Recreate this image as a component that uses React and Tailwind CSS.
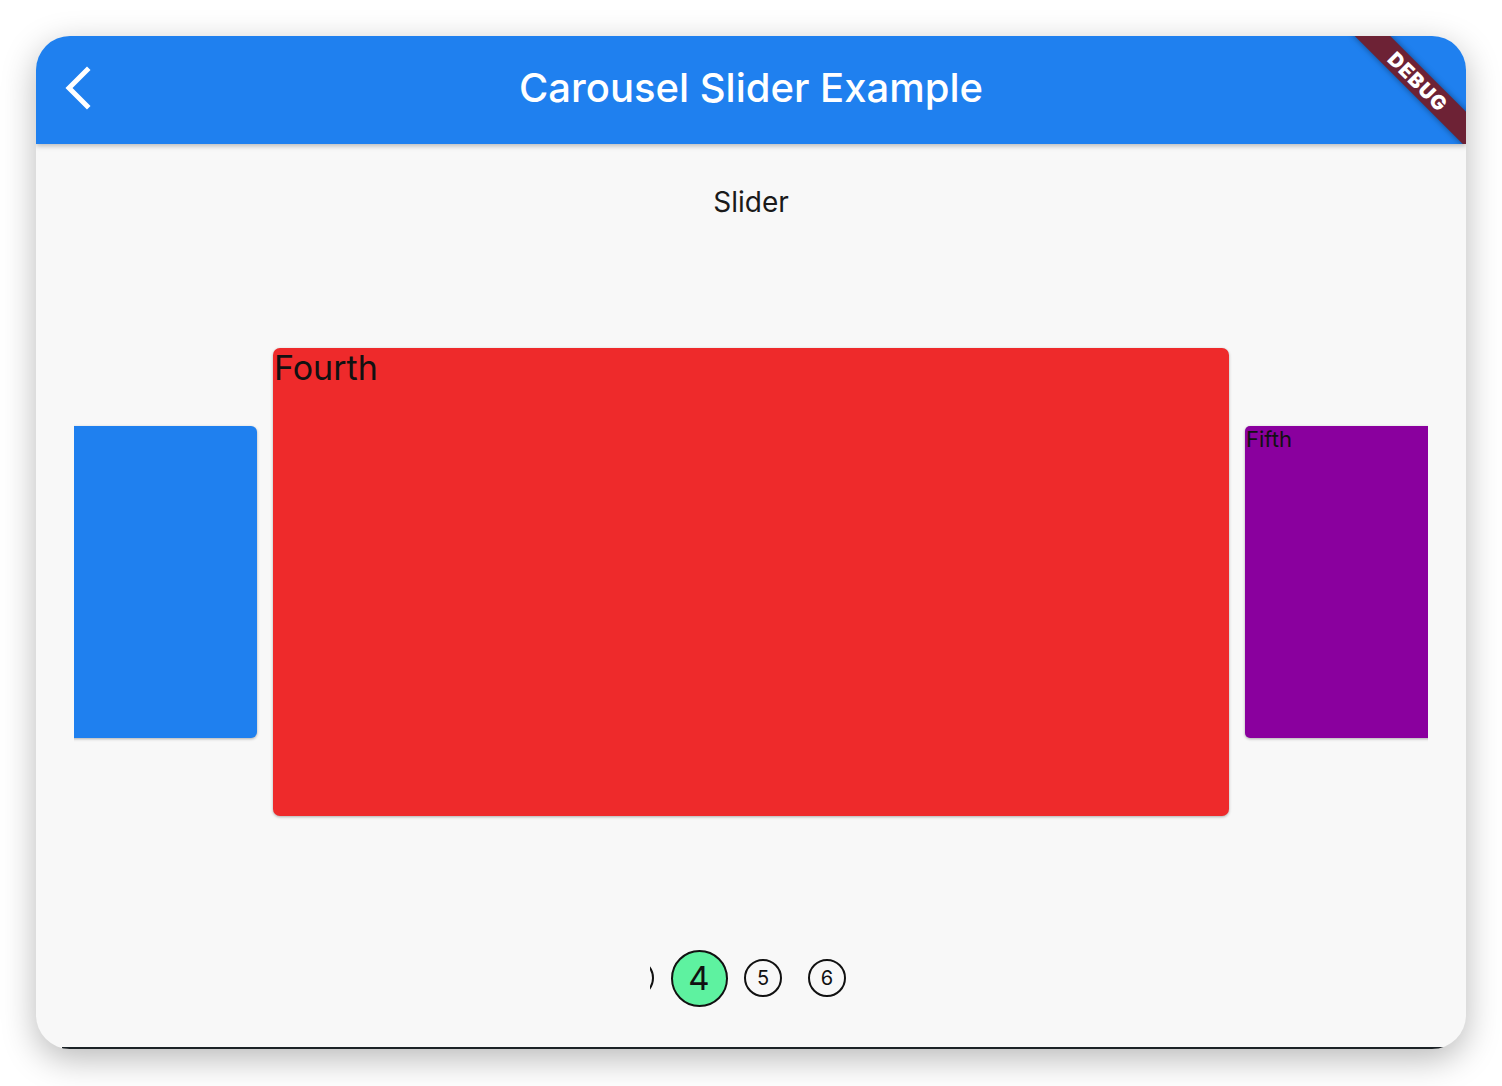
import React from 'react';

const font = { fontFamily: 'Inter, "Noto Sans", sans-serif' };

const Dot = ({ n, active }) => (
  <div className="w-[64px] h-[58px] shrink-0 flex items-center justify-center">
    {active ? (
      <div className="w-[57px] h-[57px] rounded-full border-[2.5px] border-[#111] bg-[#5ef2a0] flex items-center justify-center text-[33px] leading-none text-[#111]">
        {n}
      </div>
    ) : (
      <div className="w-[38px] h-[38px] rounded-full border-2 border-[#111] flex items-center justify-center text-[20px] leading-none text-[#111]">
        {n}
      </div>
    )}
  </div>
);

export default function App() {
  return (
    <div className="w-[1502px] h-[1086px] bg-white pt-[36px] pl-[36px]" style={font}>
      {/* Window */}
      <div className="relative w-[1430px] h-[1013px] rounded-[34px] overflow-hidden bg-[#f8f8f8] shadow-[0_10px_34px_rgba(0,0,0,0.28)]">
        {/* App bar */}
        <div className="relative z-10 h-[108px] bg-[#1f80ef] flex items-center overflow-hidden shadow-[0_2px_5px_rgba(0,0,0,0.25)]">
          <div className="absolute left-[28px] top-[30px]">
            <svg width="30" height="44" viewBox="0 0 30 44" fill="none">
              <path d="M23 4 L5 22 L23 40" stroke="white" strokeWidth="5" strokeLinecap="square" />
            </svg>
          </div>
          <h1 className="w-full text-center text-white text-[40px] font-medium leading-[48px] pb-[4px]">
            Carousel Slider Example
          </h1>
          {/* Debug banner */}
          <div className="absolute left-[1302px] top-[33px] w-[160px] h-[25px] rotate-45 bg-[#6d2235] shadow-[0_0_6px_rgba(0,0,0,0.45)] flex items-center justify-center">
            <span className="text-white text-[20px] font-black tracking-[1px] leading-none">DEBUG</span>
          </div>
        </div>

        {/* Body */}
        <div className="flex flex-col items-center pt-[41px]">
          <div className="text-[28px] leading-[34px] text-[#1a1a1a]">Slider</div>

          {/* Carousel */}
          <div className="self-stretch mx-[38px] mt-[63px] h-[600px] overflow-hidden flex items-center gap-4">
            <div className="w-[200px] h-[312px] shrink-0 ml-[-17px] rounded-[6px] bg-[#1f80ef] shadow-[0_1px_3px_rgba(0,0,0,0.3)]" />
            <div className="w-[956px] h-[468px] shrink-0 rounded-[7px] bg-[#ee2a2b] shadow-[0_1px_3px_rgba(0,0,0,0.3)]">
              <div className="pl-[1px] text-[34px] leading-[40px] text-[#111]">Fourth</div>
            </div>
            <div className="w-[200px] h-[312px] shrink-0 rounded-[5px] bg-[#8a009e] shadow-[0_1px_3px_rgba(0,0,0,0.3)]">
              <div className="pl-[1px] text-[22px] leading-[27px] text-[#111]">Fifth</div>
            </div>
          </div>

          {/* Page indicator */}
          <div className="w-[209px] ml-[7px] mt-[67px] overflow-hidden">
            <div className="flex ml-[-47px]">
              <Dot n="" />
              <Dot n={4} active />
              <Dot n={5} />
              <Dot n={6} />
            </div>
          </div>
        </div>

        {/* background strip at the lower edge */}
        <div className="absolute bottom-0 left-[26px] right-[22px] h-[2px] bg-[#1b2226]" />
      </div>
    </div>
  );
}
